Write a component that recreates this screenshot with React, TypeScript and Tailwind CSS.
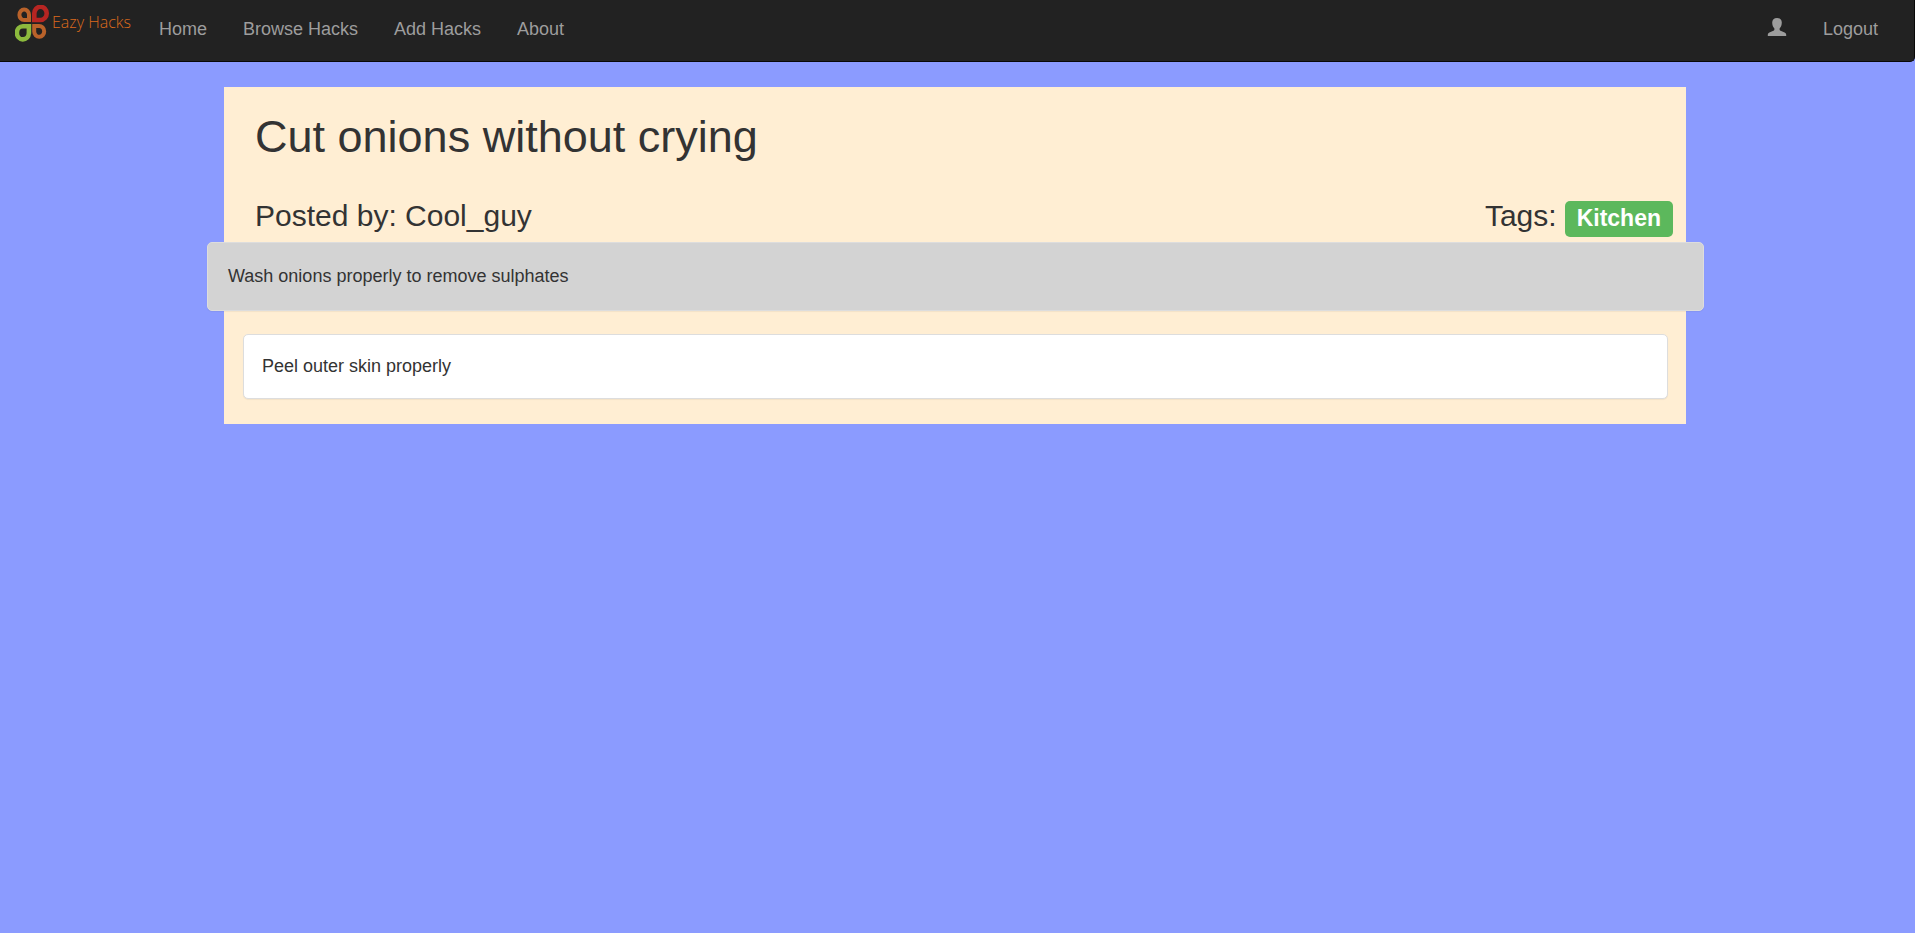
const links = ["Home", "Browse Hacks", "Add Hacks", "About"];

function Logo() {
  return (
    <svg width="34" height="38" viewBox="15 5 34 38" fill="none" strokeWidth="4" aria-hidden="true">
      <path d="M29 20H24.3A4.8 5.2 0 1 1 29 14.8Z" stroke="#b9622a" />
      <path d="M34.3 20V13.6A6.2 6.6 0 1 1 40.5 20Z" stroke="#b72522" strokeWidth="4.6" />
      <path d="M28.9 26.2V33.2A6 6.6 0 1 1 22.9 26.2Z" stroke="#8cba3d" strokeWidth="4.6" />
      <path d="M34.2 26H39A5 5.4 0 1 1 34.2 31.5Z" stroke="#b9622a" />
    </svg>
  );
}

function UserIcon() {
  return (
    <svg width="20" height="18" viewBox="0 0 20 18" fill="#9d9d9d" aria-hidden="true">
      <path d="M10 0C13 0 14.8 1.8 14.8 4.6C14.8 7.2 14 9.2 12.6 10.5V11.5C12.6 12.3 13.2 12.7 14.2 13.1L17.6 14.6C18.7 15.1 19.2 15.8 19.2 17V18H0.8V17C0.8 15.8 1.3 15.1 2.4 14.6L5.8 13.1C6.8 12.7 7.4 12.3 7.4 11.5V10.5C6 9.2 5.2 7.2 5.2 4.6C5.2 1.8 7 0 10 0Z" />
    </svg>
  );
}

export default function App() {
  return (
    <div className="min-h-screen bg-[#8b9bff] font-['Liberation_Sans',Arial,sans-serif] text-lg leading-[25px] text-[#333]">
      <nav className="flex h-[62px] items-start justify-between rounded-br-[5px] border-r border-b border-[#080808] bg-[#222] pr-[18px] text-[#9d9d9d]">
        <div className="flex items-start">
          <a href="#" className="flex gap-[3px] pt-[5px] pl-[15px] font-['Open_Sans',sans-serif] text-base font-light text-[#dc6a1c]">
            <Logo />
            <span className="leading-[34px]">Eazy Hacks</span>
          </a>
          <ul className="flex pl-[10px]">
            {links.map((label) => (
              <li key={label}>
                <a href="#" className="block px-[18px] pt-[17px] pb-4 hover:text-white">
                  {label}
                </a>
              </li>
            ))}
          </ul>
        </div>
        <ul className="flex">
          <li>
            <a href="#" aria-label="Profile" className="block px-[18px] py-[18px]">
              <UserIcon />
            </a>
          </li>
          <li>
            <a href="#" className="block px-[18px] pt-[17px] pb-4 hover:text-white">
              Logout
            </a>
          </li>
        </ul>
      </nav>
      <div className="pt-[25px] pr-[5px]">
        <main className="mx-auto max-w-[1462px] bg-[#ffeed3] py-[25px] pr-[18px] pl-[19px]">
          <h1 className="px-3 text-[45px] leading-[50px]">Cut onions without crying</h1>
          <div className="mt-[37px] flex items-start justify-between pl-3 text-[30px] leading-[33px]">
            <h3>Posted by: Cool_guy</h3>
            <h3 className="-mr-[5px] flex gap-2">
              <span>Tags:</span>
              <span className="mt-[2px] h-9 rounded-[5px] bg-[#5cb85c] px-3 text-[23px] leading-[35px] font-bold text-white">
                Kitchen
              </span>
            </h3>
          </div>
          <ol>
            <li className="-mx-9 mt-[5px] rounded-[5px] border border-[#ddd] bg-[#d3d3d3] px-5 py-[21px] shadow-[0_1px_1px_rgba(0,0,0,0.05)]">
              Wash onions properly to remove sulphates
            </li>
            <li className="mt-[23px] rounded-[5px] border border-[#ddd] bg-white px-[18px] py-[19px] shadow-[0_1px_1px_rgba(0,0,0,0.05)]">
              Peel outer skin properly
            </li>
          </ol>
        </main>
      </div>
    </div>
  );
}
